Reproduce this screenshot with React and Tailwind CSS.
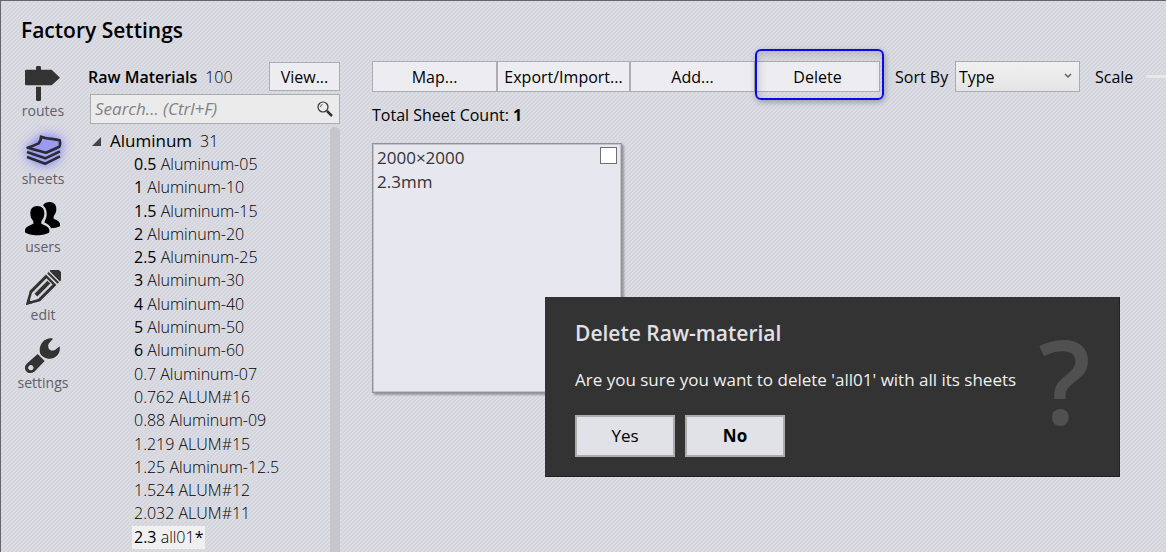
import React from "react";

const materials = [
  ["0.5", "Aluminum-05", true],
  ["1", "Aluminum-10", true],
  ["1.5", "Aluminum-15", true],
  ["2", "Aluminum-20", true],
  ["2.5", "Aluminum-25", true],
  ["3", "Aluminum-30", true],
  ["4", "Aluminum-40", true],
  ["5", "Aluminum-50", true],
  ["6", "Aluminum-60", true],
  ["0.7", "Aluminum-07", false],
  ["0.762", "ALUM#16", false],
  ["0.88", "Aluminum-09", false],
  ["1.219", "ALUM#15", false],
  ["1.25", "Aluminum-12.5", false],
  ["1.524", "ALUM#12", false],
  ["2.032", "ALUM#11", false],
];

function RoutesIcon() {
  return (
    <svg viewBox="0 0 105 105" className="h-[35px] w-[35px] fill-[#333]" aria-hidden="true">
      <path d="M33 4q0-4 4-4h7q4 0 4 4v8h-15zM4 11h76l25 24-25 23H4q-4 0-4-4V15q0-4 4-4zM33 62h15v39q0 4-4 4h-7q-4 0-4-4z" />
    </svg>
  );
}

function SheetsIcon() {
  return (
    <svg
      viewBox="0 0 105 105"
      className="h-[35px] w-[35px] overflow-visible fill-[#9a9af0] stroke-[#2b2b33] drop-shadow-[0_0_6px_#6a6aff]"
      strokeWidth="8"
      strokeLinejoin="round"
      aria-hidden="true"
    >
      <path d="M3 69L58 89 102 67M3 54L58 73 102 52" className="fill-[#a4a4f0]" />
      <path d="M45 8C62 15 82 14 101 19Q104 30 100 38L60 56 5 41Q30 32 38 28 45 20 45 8Z" />
    </svg>
  );
}

function UsersIcon() {
  return (
    <svg viewBox="0 0 105 105" className="h-[35px] w-[35px] fill-black" aria-hidden="true">
      <path d="M37 12C51 12 58 21 58 34 58 46 54 51 49 58V65C58 70 73 74 73 84V91C60 103 13 103 0 91V84C0 74 17 70 25 65V58C20 51 16 46 16 34 16 21 23 12 37 12Z" />
      <path d="M54 10C58 3 66 0 74 0 87 0 94 9 94 21 94 32 90 37 86 43V50C95 54 105 58 105 67V73C98 77 88 79 78 79 75 70 67 66 58 61 63 51 66 43 65 31 64 22 60 15 54 10Z" />
    </svg>
  );
}

function PencilIcon() {
  return (
    <svg viewBox="0 0 105 105" className="h-[35px] w-[35px] fill-[#333]" aria-hidden="true">
      <g transform="translate(0 105) rotate(-45)">
        <path fillRule="evenodd" d="M0 0L38-22H107V22H38ZM15 0L38 13H100V-13H38Z" />
        <path d="M0 0L18-10V10ZM42-6H97V6H42ZM112-22H118V22H112ZM122-22H131Q144-22 144-9V9Q144 22 131 22H122Z" />
      </g>
    </svg>
  );
}

function WrenchIcon() {
  return (
    <svg viewBox="0 0 105 105" className="h-[35px] w-[35px] fill-[#333]" aria-hidden="true">
      <path d="M84 2L71 17Q67 28 74 35 82 40 90 36L104 25C108 46 92 64 70 62 61 62 55 57 49 52 41 42 43 23 53 12 62 2 74-1 84 2Z" />
      <path fillRule="evenodd" d="M38 48L59 69 31 98C23 107 11 107 5 101-2 95-2 84 5 77ZM17 81a8 8 0 1 0 1 0Z" />
    </svg>
  );
}

const sections = [
  ["routes", RoutesIcon],
  ["sheets", SheetsIcon],
  ["users", UsersIcon],
  ["edit", PencilIcon],
  ["settings", WrenchIcon],
];

const tool =
  "h-[31px] border border-[#acacb2] bg-[#ededf1] text-center text-black";

export default function App() {
  return (
    <div className="relative flex min-h-screen flex-col overflow-hidden border-t border-l border-[#66666c] bg-[#d9d9e1] bg-[linear-gradient(135deg,#d4d4dc_25%,#dcdce4_25%,#dcdce4_50%,#d4d4dc_50%,#d4d4dc_75%,#dcdce4_75%)] bg-[length:4px_4px] font-['Open_Sans','Noto_Sans',sans-serif] text-base leading-6 text-black">
      <header className="px-5 pt-[13px]">
        <h1 className="text-[21px] leading-8 font-semibold">Factory Settings</h1>
      </header>

      <div className="flex flex-1 pt-[15px]">
        <nav className="flex w-[84px] shrink-0 flex-col items-center gap-[13px] pt-[5px]">
          {sections.map(([name, Icon]) => (
            <a key={name} href={"#" + name} className="flex flex-col items-center text-sm leading-5 text-[#606066]">
              <Icon />
              {name}
            </a>
          ))}
        </nav>

        <aside className="flex w-[255px] shrink-0 flex-col pb-[3px] pl-[3px]">
          <div className="flex items-center gap-2 pt-px">
            <h2 className="font-semibold">Raw Materials</h2>
            <span className="font-light">100</span>
            <button type="button" className="ml-auto h-[29px] w-[71px] border border-[#acacb2] bg-[#ededf1]">View...</button>
          </div>
          <label className="mt-[3px] ml-[2px] flex h-[30px] items-center border border-[#acacac] bg-[#ebebeb] pr-[6px] pl-1">
            <input type="search" aria-label="Search materials" placeholder="Search... (Ctrl+F)" className="min-w-0 flex-1 bg-transparent text-[17px] italic outline-none placeholder:text-[#828282]" />
            <svg viewBox="0 0 16 16" className="h-4 w-4 fill-none stroke-[#333]" aria-hidden="true">
              <circle cx="6" cy="6" r="5" strokeWidth="1.2" />
              <path d="M3.500 6a2.500 2.500 0 0 1 2-2.500" strokeWidth="0.800" />
              <path d="M10 10l5 5" strokeWidth="2.500" />
            </svg>
          </label>

          <div className="flex flex-1 pt-[3px]">
            <div className="flex flex-1 flex-col">
              <div className="flex items-center pt-[2px] pl-1">
                <svg viewBox="0 0 9 9" className="mr-[9px] h-[9px] w-[9px] fill-[#444]" aria-hidden="true">
                  <path d="M9 0v9H0z" />
                </svg>
                <span className="text-[17px]">Aluminum</span>
                <span className="ml-2 font-light">31</span>
              </div>
              <ul className="flex flex-1 flex-col pl-11 leading-[23px] font-light">
                {materials.map(([size, name, stocked]) => (
                  <li key={name} className="min-h-[23px] flex-1 px-[2px]">
                    <span className={stocked ? "font-normal" : ""}>{size}</span> {name}
                  </li>
                ))}
                <li className="min-h-[23px] flex-1 self-start bg-[#f0f0f0] px-[2px]">
                  <span className="font-normal">2.3</span> all01<span className="font-normal">*</span>
                </li>
              </ul>
            </div>
            <div className="-mb-[3px] w-[10px] rounded-t-full bg-[#c5c5cb]" />
          </div>
        </aside>

        <main className="min-w-0 flex-1 pl-8">
          <div className="flex items-center whitespace-nowrap">
            <button type="button" className={tool + " w-[125px] shrink-0"}>Map...</button>
            <button type="button" className={tool + " w-[133px] shrink-0"}>Export/Import...</button>
            <button type="button" className={tool + " w-[125px] shrink-0"}>Add...</button>
            <div className="relative shrink-0">
              <button type="button" className={tool + " w-[125px]"}>Delete</button>
              <div className="pointer-events-none absolute -top-3 -right-1 -bottom-2 left-0 rounded-md border-2 border-[#0a0af0] shadow-[1px_2px_6px_rgba(0,0,0,0.3),inset_2px_4px_8px_rgba(0,0,0,0.15)]" />
            </div>
            <label htmlFor="sort" className="ml-[15px] w-14 shrink-0">Sort By</label>
            <div className="relative ml-1 shrink-0">
              <select id="sort" className="block h-[31px] w-[125px] appearance-none border border-[#acacac] bg-linear-to-b from-[#f0f0f0] to-[#e5e5e5] pl-[3px]">
                <option>Type</option>
              </select>
              <svg viewBox="0 0 8 6" className="pointer-events-none absolute top-3 right-2 h-[6px] w-2 fill-none stroke-[#606060]" aria-hidden="true">
                <path d="M1 1l3 3 3-3" strokeWidth="1.500" />
              </svg>
            </div>
            <label htmlFor="scale" className="ml-[15px]">Scale</label>
            <input id="scale" type="range" className="ml-3 h-[5px] w-40 shrink-0 appearance-none border border-[#d6d6d6] bg-[#e7eaea] [&::-webkit-slider-thumb]:appearance-none" />
          </div>

          <p className="mt-[11px]">
            Total Sheet Count: <b>1</b>
          </p>

          <section className="mt-4 flex h-[250px] w-[250px] items-start justify-between border border-[#919197] bg-[#e7e7f0] py-[2px] pr-1 pl-1 text-[#333] shadow-[inset_0_0_0_1px_#c4c4cb,2px_2px_2px_rgba(0,0,0,0.3)]">
            <p className="text-[17px]">
              2000×2000
              <br />
              2.3mm
            </p>
            <input type="checkbox" aria-label="Select sheet" className="mt-px h-[17px] w-[17px] appearance-none border border-[#707070] bg-white" />
          </section>
        </main>
      </div>

      <div role="dialog" aria-labelledby="dialog-title" className="absolute top-[296px] right-[46px] flex w-[575px] justify-between border-r border-b border-[#222] bg-[#333] pt-5 pr-7 pb-[19px] pl-[30px] text-[#f0f0f0]">
        <div>
          <h2 id="dialog-title" className="text-[21px] leading-8 font-semibold text-[#e1e1e8]">Delete Raw-material</h2>
          <p className="mt-[19px] text-[17px] whitespace-nowrap">Are you sure you want to delete 'all01' with all its sheets</p>
          <div className="mt-[23px] flex gap-[10px] text-[17px] text-black">
            <button type="button" className="h-[42px] w-[100px] border-2 border-[#acacac] bg-[#e1e1e8]">Yes</button>
            <button type="button" className="h-[42px] w-[100px] border-2 border-[#acacac] bg-[#e1e1e8] font-bold">No</button>
          </div>
        </div>
        <span aria-hidden="true" className="mt-1 text-[116px] leading-[116px] font-semibold text-[#505050]">?</span>
      </div>
    </div>
  );
}
